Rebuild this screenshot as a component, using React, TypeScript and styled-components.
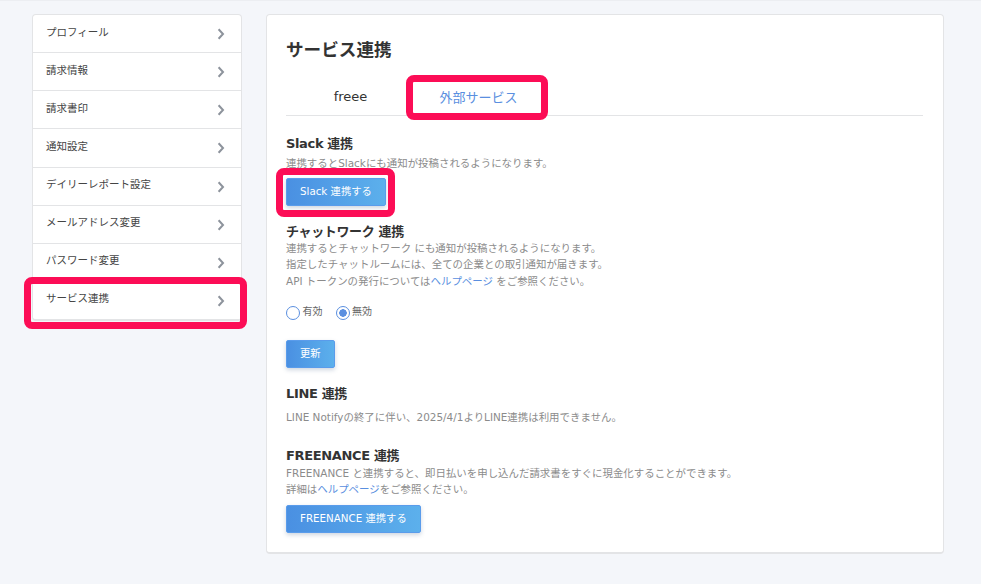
import styled, { createGlobalStyle } from 'styled-components'

const GlobalStyle = createGlobalStyle`
  html, body {
    margin: 0;
    padding: 0;
    background: #f4f6fa;
  }
  body {
    font-family: "DejaVu Sans", "Noto Sans CJK JP", sans-serif;
    color: #333;
  }
`

const Page = styled.div`
  width: 981px;
  height: 584px;
  box-sizing: border-box;
  border-top: 1px solid #eceef2;
  padding: 13px 37px 0 32px;
  display: flex;
  align-items: flex-start;
  gap: 24px;
  overflow: hidden;
`

const Menu = styled.nav`
  width: 210px;
  flex-shrink: 0;
  box-sizing: border-box;
  background: #fff;
  border: 1px solid #e3e4e6;
  border-bottom-width: 2px;
  border-radius: 4px;
`

const MenuRow = styled.a<{ $last?: boolean }>`
  position: relative;
  display: flex;
  align-items: center;
  justify-content: space-between;
  box-sizing: border-box;
  height: ${(p) => (p.$last ? '37' : '38.15')}px;
  padding: 0 16px 0 13px;
  font-size: 10.5px;
  color: #444;
  border-bottom: ${(p) => (p.$last ? 'none' : '1px solid #e3e4e6')};

  span {
    position: relative;
    top: -2.5px;
  }
`

const ChevronIcon = styled.svg`
  margin-top: 1px;
`

const Chevron = () => (
  <ChevronIcon width="8" height="12" viewBox="0 0 8 12">
    <path d="M1.6 1.2 L6 6 L1.6 10.8" fill="none" stroke="#8d939c" strokeWidth="2" />
  </ChevronIcon>
)

const Marker = styled.i<{ $top: number; $right: number; $bottom: number; $left: number }>`
  position: absolute;
  top: ${(p) => p.$top}px;
  right: ${(p) => p.$right}px;
  bottom: ${(p) => p.$bottom}px;
  left: ${(p) => p.$left}px;
  border: 7px solid #fc0d56;
  border-radius: 8px;
  pointer-events: none;
`

const Card = styled.main`
  width: 678px;
  height: 540px;
  box-sizing: border-box;
  flex-shrink: 0;
  background: #fff;
  border: 1px solid #e3e4e6;
  border-bottom-width: 2px;
  border-radius: 4px;
  padding: 24px 20px 0 19px;
`

const Title = styled.h1`
  margin: 0;
  font-size: 17.6px;
  line-height: 22px;
  font-weight: 700;
  color: #333;
`

const Tabs = styled.div`
  display: flex;
  margin-top: 15px;
  height: 39px;
  border-bottom: 1px solid #e3e4e6;
`

const Tab = styled.div<{ $active?: boolean }>`
  position: relative;
  width: 129px;
  margin-left: ${(p) => (p.$active ? '-1px' : '0')};
  padding-top: 2px;
  display: flex;
  align-items: center;
  justify-content: center;
  font-size: 13px;
  color: ${(p) => (p.$active ? '#5a8fe0' : '#333')};
`

const Section = styled.section<{ $top: number }>`
  margin-top: ${(p) => p.$top}px;
`

const Heading = styled.h2`
  margin: 0;
  font-size: 13px;
  line-height: 18px;
  font-weight: 700;
  letter-spacing: -0.35px;
  color: #333;
`

const Note = styled.p<{ $top?: number }>`
  margin: ${(p) => p.$top ?? 0}px 0 0;
  font-size: 10.45px;
  line-height: 16.5px;
  color: #8b8b8b;

  a {
    color: #5a8fe0;
  }
`

const ButtonWrap = styled.div<{ $top: number }>`
  position: relative;
  width: fit-content;
  margin-top: ${(p) => p.$top}px;
`

const Button = styled.button`
  display: block;
  height: 27.5px;
  padding: 0 13px 3px;
  font-family: inherit;
  font-size: 10.3px;
  color: #fff;
  background: linear-gradient(90deg, #4a90e2, #5cb0ec);
  border: 1px solid #5a9ceb;
  border-radius: 2px;
  box-shadow: 0 2px 4px rgba(60, 90, 130, 0.25);
`

const Radios = styled.div`
  display: flex;
  gap: 13px;
  margin-top: 13.5px;
`

const RadioLabel = styled.label`
  display: flex;
  align-items: flex-start;
  gap: 2.5px;
  font-size: 10px;
  line-height: 17px;
  color: #666;
`

const RadioDot = styled.span<{ $on?: boolean }>`
  width: 14px;
  height: 14px;
  box-sizing: border-box;
  margin-top: 3.5px;
  border: 1.5px solid #5a8fe0;
  border-radius: 50%;
  background: ${(p) => (p.$on ? 'radial-gradient(circle, #5a8fe0 0 3.5px, #fff 4px)' : '#fff')};
`

const menuItems = [
  'プロフィール',
  '請求情報',
  '請求書印',
  '通知設定',
  'デイリーレポート設定',
  'メールアドレス変更',
  'パスワード変更',
  'サービス連携',
]

export default function App() {
  return (
    <Page>
      <GlobalStyle />
      <Menu>
        {menuItems.map((item, i) => {
          const last = i === menuItems.length - 1
          return (
            <MenuRow key={item} $last={last}>
              <span>{item}</span>
              <Chevron />
              {last && <Marker $top={-5} $right={-6} $bottom={-10} $left={-9} />}
            </MenuRow>
          )
        })}
      </Menu>
      <Card>
        <Title>サービス連携</Title>
        <Tabs>
          <Tab>freee</Tab>
          <Tab $active>
            外部サービス
            <Marker $top={-1} $right={-5} $bottom={-5} $left={-8} />
          </Tab>
        </Tabs>
        <Section $top={19}>
          <Heading>Slack 連携</Heading>
          <Note $top={2}>連携するとSlackにも通知が投稿されるようになります。</Note>
          <ButtonWrap $top={6.75}>
            <Button>Slack 連携する</Button>
            <Marker $top={-10} $right={-9} $bottom={-11} $left={-10} />
          </ButtonWrap>
        </Section>
        <Section $top={17}>
          <Heading>チャットワーク 連携</Heading>
          <Note $top={-1}>連携するとチャットワーク にも通知が投稿されるようになります。</Note>
          <Note>指定したチャットルームには、全ての企業との取引通知が届きます。</Note>
          <Note>
            API トークンの発行については<a>ヘルプページ</a> をご参照ください。
          </Note>
          <Radios>
            <RadioLabel>
              <RadioDot />
              有効
            </RadioLabel>
            <RadioLabel>
              <RadioDot $on />
              無効
            </RadioLabel>
          </Radios>
          <ButtonWrap $top={20}>
            <Button>更新</Button>
          </ButtonWrap>
        </Section>
        <Section $top={17}>
          <Heading>LINE 連携</Heading>
          <Note $top={5.75}>LINE Notifyの終了に伴い、2025/4/1よりLINE連携は利用できません。</Note>
        </Section>
        <Section $top={21.75}>
          <Heading>FREENANCE 連携</Heading>
          <Note $top={0}>FREENANCE と連携すると、即日払いを申し込んだ請求書をすぐに現金化することができます。</Note>
          <Note>
            詳細は<a>ヘルプページ</a>をご参照ください。
          </Note>
          <ButtonWrap $top={7.25}>
            <Button>FREENANCE 連携する</Button>
          </ButtonWrap>
        </Section>
      </Card>
    </Page>
  )
}
